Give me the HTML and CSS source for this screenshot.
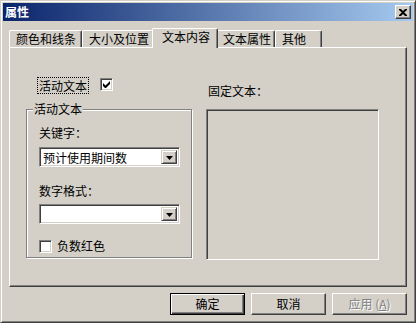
FILE: index.html
```html
<!DOCTYPE html>
<html>
<head>
<meta charset="utf-8">
<link rel="stylesheet" href="styles.css">
</head>
<body>
<div class="window">
  <div class="titlebar">
    <span class="title">属性</span>
    <div class="close"><svg width="8" height="7" viewBox="0 0 8 7"><path d="M0 0h2l2 2 2-2h2v1L5.2 3.5 8 6v1H6L4 5 2 7H0V6l2.8-2.5L0 1z" fill="#000"/></svg></div>
  </div>
  <div class="client">
    <div class="tabs">
      <div class="tab w1">颜色和线条</div>
      <div class="tab w2">大小及位置</div>
      <div class="tab sel">文本内容</div>
      <div class="tab w4">文本属性</div>
      <div class="tab w5">其他</div>
    </div>
    <div class="panel">
      <div class="col-left">
        <div class="checkrow">
          <span class="focus">活动文本</span>
          <span class="cb top"><svg width="7" height="7" viewBox="0 0 7 7"><path d="M0 2v3l2 2h1l4-4V0L2.5 4.5z" fill="#000"/></svg></span>
        </div>
        <fieldset class="group">
          <legend>活动文本</legend>
          <div class="lbl l1">关键字：</div>
          <div class="combo c1"><span class="val">预计使用期间数</span><span class="drop"><svg width="7" height="4" viewBox="0 0 7 4"><path d="M0 0h7L3.5 4z" fill="#000"/></svg></span></div>
          <div class="lbl l2">数字格式：</div>
          <div class="combo c2"><span class="val"></span><span class="drop"><svg width="7" height="4" viewBox="0 0 7 4"><path d="M0 0h7L3.5 4z" fill="#000"/></svg></span></div>
          <div class="checkrow2"><span class="cb"></span><span class="cbl">负数红色</span></div>
        </fieldset>
      </div>
      <div class="col-right">
        <div class="lbl fixed">固定文本：</div>
        <div class="textbox"></div>
      </div>
    </div>
    <div class="buttons">
      <div class="btn default"><span>确定</span></div>
      <div class="btn"><span>取消</span></div>
      <div class="btn disabled"><span>应用 (<u>A</u>)</span></div>
    </div>
  </div>
</div>
</body>
</html>
```

FILE: styles.css
```css
* { box-sizing: border-box; }
html, body { margin: 0; padding: 0; background: #D4D0C8; }
body {
  font-family: "Noto Sans CJK SC", "Liberation Sans", sans-serif;
  font-size: 12px;
  color: #000;
}
.window {
  width: 416px;
  height: 323px;
  background: #D4D0C8;
  border: 1px solid;
  border-color: #D4D0C8 #404040 #404040 #D4D0C8;
  box-shadow: inset 1px 1px 0 #fff, inset -1px -1px 0 #808080;
  padding: 2px;
}
.titlebar {
  height: 18px;
  background: linear-gradient(to right, #0A246A, #A6CAF0);
  display: flex;
  align-items: center;
  justify-content: space-between;
  padding: 0 2px 0 2px;
}
.title {
  color: #fff;
  font-weight: bold;
  font-size: 12px;
  line-height: 14px;
}
.close {
  width: 16px;
  height: 14px;
  background: #D4D0C8;
  border: 1px solid;
  border-color: #fff #404040 #404040 #fff;
  box-shadow: inset -1px -1px 0 #808080;
  display: flex;
  align-items: center;
  justify-content: center;
  padding-right: 1px;
}
.close svg { display: block; }
.client { padding: 7px 6px 0 6px; }
.tabs {
  display: flex;
  align-items: flex-end;
  height: 19px;
  position: relative;
  z-index: 1;
}
.tab {
  height: 17px;
  line-height: 15px;
  padding-left: 6px;
  border-top: 1px solid #fff;
  border-left: 1px solid #fff;
  border-right: 1px solid #404040;
  box-shadow: inset -1px 0 0 #808080;
  border-radius: 2px 2px 0 0;
  white-space: nowrap;
  background: #D4D0C8;
}
.w1 { width: 73px; }
.w2 { width: 72px; }
.w4 { width: 59px; }
.w5 { width: 47px; }
.tab.sel {
  width: 66px;
  height: 20px;
  margin: 0 -2px -1px -2px;
  padding-left: 9px;
  line-height: 16px;
  position: relative;
  z-index: 2;
}
.panel {
  height: 240px;
  border: 1px solid;
  border-color: #fff #404040 #404040 #fff;
  box-shadow: inset -1px -1px 0 #808080;
  display: flex;
  padding: 29px 0 0 16px;
}
.col-left { width: 167px; }
.checkrow {
  display: flex;
  align-items: flex-start;
  height: 17px;
}
.focus {
  margin-left: 11px;
  border: 1px dotted #000;
  padding: 0 1px;
  height: 17px;
  line-height: 15px;
}
.cb {
  width: 13px;
  height: 13px;
  background: #fff;
  border: 1px solid;
  border-color: #808080 #fff #fff #808080;
  box-shadow: inset 1px 1px 0 #404040, inset -1px -1px 0 #D4D0C8;
  display: flex;
  align-items: center;
  justify-content: center;
  flex: none;
}
.cb svg { display: block; }
.cb.top { margin-left: 11px; margin-top: 1px; }
.group {
  margin: 8px 0 0 0;
  width: 166px;
  border: 1px solid #808080;
  box-shadow: 1px 1px 0 #fff, inset 1px 1px 0 #fff;
  padding: 0 0 4px 12px;
  min-width: 0;
}
.group legend {
  padding: 0 1px;
  margin-left: -6px;
  line-height: 14px;
  background: #D4D0C8;
}
.lbl { line-height: 14px; height: 14px; }
.l1 { margin-top: 10px; }
.l2 { margin-top: 17px; }
.combo {
  width: 141px;
  height: 20px;
  background: #fff;
  border: 1px solid;
  border-color: #808080 #fff #fff #808080;
  box-shadow: inset 1px 1px 0 #404040, inset -1px -1px 0 #D4D0C8;
  display: flex;
  align-items: stretch;
  padding: 2px;
}
.c1 { margin-top: 7px; }
.c2 { margin-top: 6px; }
.val {
  flex: 1;
  line-height: 16px;
  padding-left: 1px;
  white-space: nowrap;
}
.drop {
  width: 16px;
  flex: none;
  background: #D4D0C8;
  border: 1px solid;
  border-color: #D4D0C8 #404040 #404040 #D4D0C8;
  box-shadow: inset 1px 1px 0 #fff, inset -1px -1px 0 #808080;
  display: flex;
  align-items: center;
  justify-content: center;
}
.drop svg { display: block; margin-top: 1px; }
.checkrow2 {
  margin-top: 15px;
  display: flex;
  align-items: center;
  height: 14px;
}
.cbl { margin-left: 5px; line-height: 14px; }
.col-right {
  margin-left: 13px;
  width: 173px;
  padding-top: 7px;
}
.fixed { padding-left: 2px; }
.textbox {
  margin-top: 11px;
  height: 151px;
  border: 1px solid;
  border-color: #808080 #fff #fff #808080;
  box-shadow: inset 1px 1px 0 #404040, inset -1px -1px 0 #D4D0C8;
  background: #D4D0C8;
}
.buttons {
  margin-top: 6px;
  display: flex;
  justify-content: flex-end;
  gap: 6px;
}
.btn {
  width: 75px;
  height: 22px;
  border: 1px solid;
  border-color: #fff #404040 #404040 #fff;
  box-shadow: inset -1px -1px 0 #808080;
  display: flex;
  align-items: center;
  justify-content: center;
  line-height: 14px;
}
.btn.default {
  border: 1px solid #000;
  box-shadow: inset 1px 1px 0 #fff, inset -1px -1px 0 #404040, inset -2px -2px 0 #808080;
}
.btn.disabled span {
  color: #808080;
  text-shadow: 1px 1px 0 #fff;
}
.btn.disabled u { text-decoration: underline; }
```
